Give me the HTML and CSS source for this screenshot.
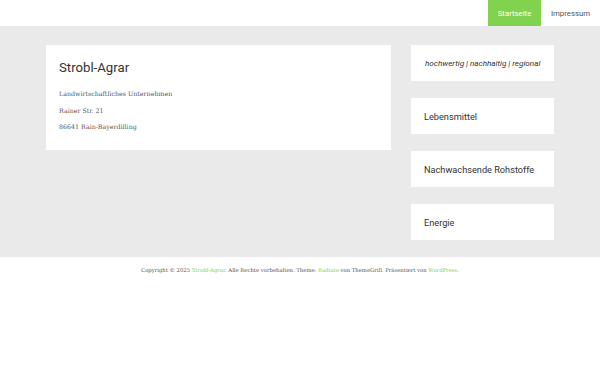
FILE: index.html
```html
<!DOCTYPE html>
<html lang="de">
<head>
<meta charset="utf-8">
<title>Strobl-Agrar</title>
<link rel="stylesheet" href="styles.css">
</head>
<body>
<header class="site-header">
  <nav class="main-nav">
    <a class="nav-link current" href="#">Startseite</a>
    <a class="nav-link" href="#">Impressum</a>
  </nav>
</header>
<main class="site-main">
  <article class="card">
    <h1 class="card-title">Strobl-Agrar</h1>
    <p class="card-line">Landwirtschaftliches Unternehmen</p>
    <p class="card-line">Rainer Str. 21</p>
    <p class="card-line">86641 Rain-Bayerdilling</p>
  </article>
  <aside class="sidebar">
    <div class="widget widget-tagline">hochwertig | nachhaltig | regional</div>
    <div class="widget">Lebensmittel</div>
    <div class="widget">Nachwachsende Rohstoffe</div>
    <div class="widget">Energie</div>
  </aside>
</main>
<footer class="site-footer">
  Copyright © 2025 <a href="#">Strobl-Agrar</a>. Alle Rechte vorbehalten. Theme: <a href="#">Radiate</a> von ThemeGrill. Präsentiert von <a href="#">WordPress</a>.
</footer>
</body>
</html>
```
FILE: styles.css
```css
html, body {
  margin: 0;
  padding: 0;
  background: #fff;
}
body {
  font-family: "DejaVu Serif", serif;
  color: #555;
}
.site-header {
  height: 26px;
  display: flex;
  justify-content: flex-end;
  background: #fff;
}
.main-nav {
  display: flex;
}
.nav-link {
  display: flex;
  align-items: center;
  justify-content: center;
  width: 59px;
  box-sizing: border-box;
  font-family: Roboto, "Liberation Sans", sans-serif;
  font-size: 7.8px;
  color: #555;
  text-decoration: none;
}
.nav-link.current {
  background: #80d24f;
  color: #fff;
  width: 53px;
}
.site-main {
  background: #eaeaea;
  padding: 19px 46px 17px;
  display: flex;
  gap: 20px;
  align-items: flex-start;
}
.card {
  width: 345px;
  height: 105px;
  box-sizing: border-box;
  background: #fff;
  padding: 14px 13px 0;
}
.card-title {
  margin: 0 0 10px;
  font-family: Roboto, "Liberation Sans", sans-serif;
  font-weight: 400;
  font-size: 13.2px;
  line-height: 17px;
  color: #333;
}
.card-line {
  margin: 0;
  font-size: 6.3px;
  line-height: 16.5px;
  color: #555;
}
.sidebar {
  width: 143px;
  display: flex;
  flex-direction: column;
  gap: 17px;
}
.widget {
  height: 36px;
  box-sizing: border-box;
  background: #fff;
  padding: 0 13px;
  display: flex;
  align-items: center;
  white-space: nowrap;
  font-family: Roboto, "Liberation Sans", sans-serif;
  font-size: 9.2px;
  color: #333;
}
.widget-tagline {
  font-style: italic;
  font-size: 8.1px;
  padding-left: 14px;
}
.site-footer {
  text-align: center;
  font-size: 5.3px;
  line-height: 12px;
  padding-top: 7px;
  color: #555;
}
.site-footer a {
  color: #80d24f;
  text-decoration: none;
}
```
